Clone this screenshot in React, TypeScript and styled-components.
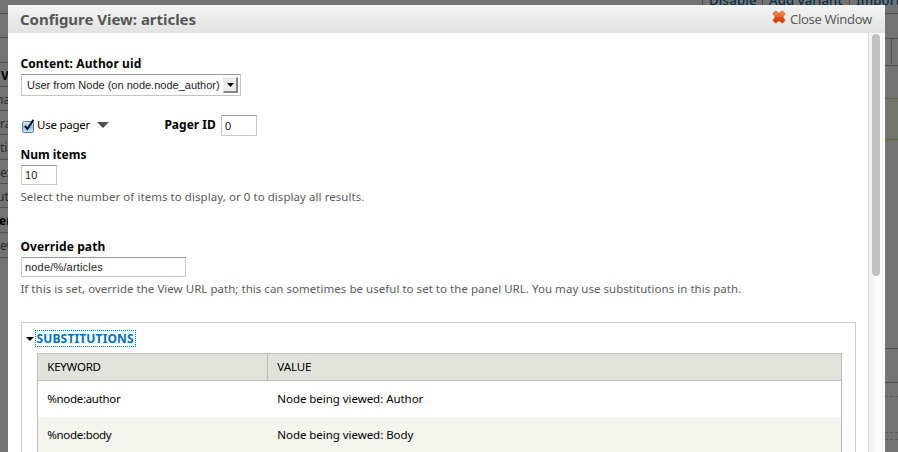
import React from "react";
import styled, { createGlobalStyle } from "styled-components";

const GlobalStyle = createGlobalStyle`
  * { box-sizing: border-box; }
  body { margin: 0; overflow: hidden; background: #737373; }
`;

const Page = styled.div`
  display: grid;
  grid-template-columns: 8px 877px 13px;
  grid-template-rows: 5px 447px;
  width: 898px;
  height: 452px;
  overflow: hidden;
  background: #737373;
  font-family: "Noto Sans", sans-serif;
  color: #000;
`;

const ActionBar = styled.nav`
  grid-column: 1 / -1;
  display: flex;
  height: 5px;
  padding-left: 702px;
  overflow: hidden;
`;

const Action = styled.span<{ $width: number; $spacing: number }>`
  flex: none;
  width: ${(p) => p.$width}px;
  height: 5px;
  padding-left: 6px;
  border-left: 1px solid #4c4c4c;
  color: #062f4c;
  font-size: 13px;
  font-weight: 500;
  line-height: 18px;
  letter-spacing: ${(p) => p.$spacing}px;
  white-space: nowrap;
  & > span { display: block; margin-top: -9px; }
`;

const LeftStrip = styled.div`
  padding-top: 8px;
  overflow: hidden;
`;

const StripRow = styled.div<{ $height: number; $bold?: boolean; $shift?: number }>`
  display: flex;
  align-items: center;
  height: ${(p) => p.$height}px;
  padding: 2px 0 0 ${(p) => p.$shift ?? 0}px;
  border-top: 1px solid #505050;
  overflow: hidden;
  color: ${(p) => (p.$bold ? "#000" : "#2b2b2b")};
  font-size: 12px;
  font-weight: ${(p) => (p.$bold ? 700 : 400)};
  line-height: 16px;
  & > span { flex: none; margin-left: -4px; }
`;

const RightStrip = styled.div`
  padding-top: 8px;
`;

const StripCell = styled.div<{ $height: number; $line?: string; $fill?: string; $dashed?: boolean }>`
  height: ${(p) => p.$height}px;
  border-top: 1px ${(p) => (p.$dashed ? "dashed" : "solid")} ${(p) => p.$line ?? "#505050"};
  background: ${(p) => p.$fill ?? "transparent"};
`;

const Divider = styled.div`
  width: 1px;
  height: 25px;
  margin-left: 6px;
  background: #505050;
`;

const Modal = styled.section`
  display: flex;
  flex-direction: column;
  min-width: 0;
  overflow: hidden;
  background: #fff;
`;

const ModalHeader = styled.header`
  flex: none;
  display: flex;
  justify-content: space-between;
  align-items: center;
  height: 28px;
  padding: 0 13px 0 12px;
  background: linear-gradient(#f4f4f4, #e2e2e2);
  color: #575757;
`;

const Title = styled.h1`
  margin: 0;
  font-size: 15px;
  font-weight: 700;
  line-height: 20px;
  letter-spacing: -0.03px;
`;

const CloseButton = styled.button`
  display: flex;
  align-items: center;
  gap: 4px;
  padding: 0;
  border: 0;
  background: none;
  color: #5c5c5c;
  font: 400 13px/20px "Noto Sans", sans-serif;
  letter-spacing: -0.306px;
  & > svg { margin-top: -5px; }
`;

const ModalBody = styled.div`
  flex: 1;
  display: flex;
  min-height: 0;
`;

const Form = styled.form`
  flex: 1;
  min-width: 0;
  padding: 22px 12px 0 13px;
  overflow: hidden;
`;

const ScrollTrack = styled.div`
  flex: none;
  width: 17px;
  padding: 1px 4px 0 3px;
  border-left: 1px solid #dedede;
  background: linear-gradient(90deg, #f0f0f0, #fbfbfb 45%, #fdfdfd 75%, #ededed 88%, #fff 92%);
`;

const ScrollThumb = styled.div`
  width: 8px;
  height: 242px;
  border-radius: 4px;
  background: #c1c1c1;
`;

const Field = styled.div<{ $height: number }>`
  height: ${(p) => p.$height}px;
`;

const Label = styled.label<{ $spacing?: number }>`
  display: block;
  height: 16px;
  margin-left: -0.6px;
  font-size: 12px;
  font-weight: 700;
  line-height: 18px;
  letter-spacing: ${(p) => p.$spacing ?? 0}px;
  white-space: nowrap;
`;

const TextBox = styled.input<{ $width: number; $height?: number }>`
  display: block;
  width: ${(p) => p.$width}px;
  height: ${(p) => p.$height ?? 20}px;
  margin: 3px 0;
  padding: 0 3px;
  border: 1px solid #c8c8c8;
  border-top-color: #999;
  border-radius: 0;
  outline: 0;
  background: #fff;
  color: #222;
  font: 11px "Liberation Sans", sans-serif;
  letter-spacing: 0.18px;
`;

const SelectBox = styled.div`
  display: flex;
  align-items: center;
  justify-content: space-between;
  width: 220px;
  height: 22px;
  margin-top: 3px;
  padding: 0 2px 0 5px;
  border: 1px solid #c4c4c4;
  border-top-color: #999;
  color: #222;
  font: 11px/18px "Liberation Sans", sans-serif;
  letter-spacing: 0;
  white-space: nowrap;
`;

const SelectArrow = styled.span`
  display: flex;
  align-items: center;
  justify-content: center;
  width: 15px;
  height: 16px;
  border: 1px solid #eee;
  border-right: 2px solid #858585;
  border-bottom: 2px solid #858585;
  background: #ececec;
`;

const Description = styled.p<{ $spacing: number }>`
  margin: 0 0 0 -0.6px;
  color: #5b5b5b;
  font-size: 11.5px;
  line-height: 18px;
  letter-spacing: ${(p) => p.$spacing}px;
  white-space: nowrap;
`;

const PagerRow = styled.div`
  display: flex;
  align-items: flex-start;
  height: 31px;
`;

const PagerToggle = styled.label`
  display: flex;
  align-items: flex-start;
  width: 144px;
  padding-top: 2px;
  font-size: 11.5px;
  line-height: 16px;
  letter-spacing: -0.247px;
  & > svg { flex: none; }
  & > svg:first-child { margin: 2px 2px 0 1px; }
  & > svg:last-child { margin: 5px 0 0 7px; }
`;

const PagerId = styled.div`
  display: flex;
  gap: 5px;
  & > label { width: 51.6px; padding-top: 1px; letter-spacing: 0; }
  & > input { margin: 0; }
`;

const Fieldset = styled.section`
  width: 835px;
  height: 160px;
  padding: 7px 0 0 4px;
  border: 1px solid #ccc;
`;

const Legend = styled.div`
  display: flex;
  align-items: center;
  gap: 1px;
  height: 17px;
`;

const LegendLink = styled.a`
  display: block;
  height: 17px;
  width: 101px;
  padding-left: 0.5px;
  border: 1px dotted #0071b8;
  color: #0071b8;
  font-size: 12px;
  font-weight: 700;
  line-height: 15px;
  letter-spacing: 0.15px;
  white-space: nowrap;
`;

const Table = styled.div`
  width: 805px;
  margin: 6px 0 0 11px;
  border: 1px solid #bebfb9;
`;

const TableRow = styled.div<{ $kind?: "head" | "even" }>`
  display: grid;
  grid-template-columns: 230px 1fr;
  height: ${(p) => (p.$kind === "head" ? 27 : 36)}px;
  border-bottom: ${(p) => (p.$kind === "head" ? "1px solid #bebfb9" : "0")};
  background: ${(p) => (p.$kind === "head" ? "#e1e2dc" : p.$kind === "even" ? "#f3f4ee" : "#fff")};
`;

const Cell = styled.div<{ $spacing: number; $head?: boolean; $first?: boolean }>`
  padding: ${(p) => (p.$head ? 5 : 10)}px 0 0 9.3px;
  border-right: ${(p) => (p.$head && p.$first ? "1px solid #bebfb9" : "0")};
  font-size: 11.5px;
  line-height: 16px;
  letter-spacing: ${(p) => p.$spacing}px;
`;

const CloseIcon = () => (
  <svg width="14" height="14" viewBox="0 0 14 14">
    <defs>
      <linearGradient id="cross" x1="0" y1="0" x2="0" y2="1">
        <stop offset="0" stopColor="#ee9150" />
        <stop offset="0.5" stopColor="#e2662b" />
        <stop offset="0.55" stopColor="#d64a17" />
        <stop offset="1" stopColor="#c93a12" />
      </linearGradient>
    </defs>
    <path
      d="M3.8 .8 7 3.2 10.2 .8 13.2 3.6 11 7 13.2 10.4 10.2 13.2 7 10.8 3.8 13.2 .8 10.4 3 7 .8 3.6Z"
      fill="url(#cross)"
      stroke="#dc6c35"
      strokeWidth=".7"
      strokeLinejoin="round"
    />
  </svg>
);

const CheckIcon = () => (
  <svg width="13" height="14" viewBox="0 0 13 14">
    <defs>
      <linearGradient id="box" x1="0" y1="0" x2="0" y2="1">
        <stop offset="0" stopColor="#e3f0fb" />
        <stop offset="0.5" stopColor="#91bfea" />
        <stop offset="1" stopColor="#c8f0ff" />
      </linearGradient>
    </defs>
    <rect x=".5" y="2.5" width="11" height="11" rx="2" fill="url(#box)" stroke="#59749f" />
    <path d="M3 6.8 5.4 10 11.4 .9" fill="none" stroke="#10151d" strokeWidth="2" />
  </svg>
);

const Triangle = ({ width, height, color }: { width: number; height: number; color: string }) => (
  <svg width={width} height={height} viewBox="0 0 12 6" preserveAspectRatio="none">
    <path d="M0 0H12L6 6Z" fill={color} />
  </svg>
);

const stripRows = [
  { text: "", height: 24 },
  { text: "", height: 25 },
  { text: "V", height: 24, shift: 5, bold: true },
  { text: "na", height: 24 },
  { text: "ra", height: 24, shift: 4 },
  { text: "tio", height: 25, shift: 4 },
  { text: "ex", height: 24, shift: 4 },
  { text: "ut", height: 24, shift: 1 },
  { text: "er", height: 25, shift: 3, bold: true },
  { text: "ew", height: 25, shift: 4 },
];

const substitutions = [
  { keyword: "%node:author", value: "Node being viewed: Author" },
  { keyword: "%node:body", value: "Node being viewed: Body" },
];

export default function App() {
  return (
    <>
      <GlobalStyle />
      <Page>
        <ActionBar>
          <Action $width={60} $spacing={0.28}><span>Disable</span></Action>
          <Action $width={87} $spacing={0.153}><span>Add variant</span></Action>
          <Action $width={60} $spacing={0.2}><span>Import</span></Action>
        </ActionBar>

        <LeftStrip>
          {stripRows.map((row, i) => (
            <StripRow key={i} $height={row.height} $bold={row.bold} $shift={row.shift}>
              <span>{row.text}</span>
            </StripRow>
          ))}
          <StripRow $height={1} />
        </LeftStrip>

        <Modal>
          <ModalHeader>
            <Title>Configure View: articles</Title>
            <CloseButton>
              <CloseIcon />
              Close Window
            </CloseButton>
          </ModalHeader>
          <ModalBody>
            <Form>
              <Field $height={60}>
                <Label $spacing={0.108}>Content: Author uid</Label>
                <SelectBox>
                  User from Node (on node.node_author)
                  <SelectArrow>
                    <Triangle width={7} height={4} color="#000" />
                  </SelectArrow>
                </SelectBox>
              </Field>
              <PagerRow>
                <PagerToggle>
                  <CheckIcon />
                  Use pager
                  <Triangle width={12} height={6} color="#4d4d4d" />
                </PagerToggle>
                <PagerId>
                  <Label>Pager ID</Label>
                  <TextBox $width={36} $height={21} defaultValue="0" />
                </PagerId>
              </PagerRow>
              <Field $height={92}>
                <Label>Num items</Label>
                <TextBox $width={36} defaultValue="10" />
                <Description $spacing={0.056}>
                  Select the number of items to display, or 0 to display all results.
                </Description>
              </Field>
              <Field $height={84}>
                <Label $spacing={0.117}>Override path</Label>
                <TextBox $width={165} defaultValue="node/%/articles" />
                <Description $spacing={0.032}>
                  If this is set, override the View URL path; this can sometimes be useful to set to the
                  panel URL. You may use substitutions in this path.
                </Description>
              </Field>
              <Fieldset>
                <Legend>
                  <Triangle width={8} height={4} color="#000" />
                  <LegendLink>SUBSTITUTIONS</LegendLink>
                </Legend>
                <Table>
                  <TableRow $kind="head">
                    <Cell $head $first $spacing={-0.25}>KEYWORD</Cell>
                    <Cell $head $spacing={-0.1}>VALUE</Cell>
                  </TableRow>
                  {substitutions.map((row, i) => (
                    <TableRow key={row.keyword} $kind={i % 2 ? "even" : undefined}>
                      <Cell $first $spacing={-0.31}>{row.keyword}</Cell>
                      <Cell $spacing={-0.044}>{row.value}</Cell>
                    </TableRow>
                  ))}
                </Table>
              </Fieldset>
            </Form>
            <ScrollTrack>
              <ScrollThumb />
            </ScrollTrack>
          </ModalBody>
        </Modal>

        <RightStrip>
          <StripCell $height={25} />
          <StripCell $height={27}><Divider /></StripCell>
          <StripCell $height={33} />
          <StripCell $height={41} $line="#52702f" $fill="#70766b" />
          <StripCell $height={209} $line="#52702f" />
          <StripCell $height={34} />
          <StripCell $height={14} />
          <StripCell $height={36} $line="#5c5c5c" $dashed />
          <StripCell $height={7} $line="#5c5c5c" $dashed />
          <StripCell $height={10} $line="#5c5c5c" $dashed />
        </RightStrip>
      </Page>
    </>
  );
}
